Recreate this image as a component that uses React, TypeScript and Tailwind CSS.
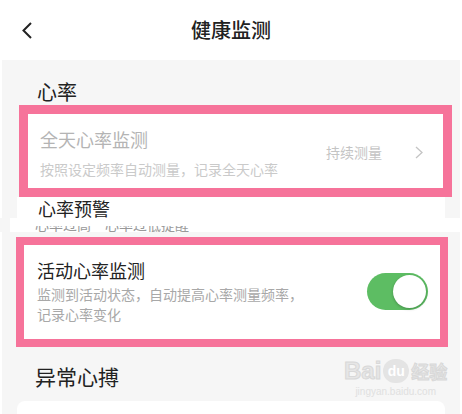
import React from "react";

const font = { fontFamily: '"Noto Sans CJK SC", "Noto Sans", sans-serif' };

const Chevron = ({ className = "" }: { className?: string }) => (
  <svg width="8" height="13" viewBox="0 0 8 13" className={className}>
    <path d="M1 1l6 5.5L1 12" fill="none" stroke="currentColor" strokeWidth="1.3" />
  </svg>
);

const Toggle = () => (
  <div className="w-[61px] h-[37px] rounded-full bg-[#5dbd63] flex items-center justify-end pr-[2px]">
    <div className="w-[33px] h-[33px] rounded-full bg-white shadow-[0_1px_3px_rgba(0,0,0,0.25)]" />
  </div>
);

const App = () => {
  return (
    <div className="w-[462px] h-[414px] bg-white overflow-hidden relative" style={font}>
      {/* Header */}
      <div className="h-[60px] flex items-center relative">
        <svg width="12" height="17" viewBox="0 0 12 17" className="ml-[21px] text-[#222]">
          <path d="M10 1L2.5 8.5 10 16" fill="none" stroke="currentColor" strokeWidth="2" />
        </svg>
        <div className="absolute left-0 right-0 text-center text-[20px] font-medium text-[#222] leading-[28px] pointer-events-none">
          健康监测
        </div>
      </div>

      {/* Section 1 */}
      <div className="bg-[#f6f6f6] mx-[2px]">
        <div className="pl-[35px] pt-[19px] text-[20px] leading-[26px] text-[#222]">心率</div>
        <div className="ml-[17px] w-[433px] border-[9px] border-[#f6739a] bg-white flex items-start pl-[12px] pr-[20px] pt-[13px] pb-[9px]">
          <div className="flex-1">
            <div className="text-[18px] leading-[24px] text-[#b4b4b4]">全天心率监测</div>
            <div className="mt-[8px] text-[14px] leading-[20px] text-[#cacaca]">按照设定频率自动测量，记录全天心率</div>
          </div>
          <div className="flex items-center gap-[33px] mt-[15px] text-[#c4c4c4]">
            <span className="text-[14px] leading-[20px]">持续测量</span>
            <Chevron />
          </div>
        </div>
        <div className="ml-[15px] w-[428px] h-[21px] bg-white overflow-hidden pl-[21px]">
          <div className="text-[18px] leading-[22px] text-[#222]">心率预警</div>
        </div>
      </div>

      {/* stitched strip */}
      <div className="h-[14px] flex">
        <div className="w-[10px] bg-[#f6f6f6]" />
        <div className="flex-1 bg-white pt-[8px] pl-[25px]">
          <div className="h-[6px] overflow-hidden">
            <div className="-mt-[12px] text-[14px] leading-[20px] text-[#999]">心率过高　心率过低提醒</div>
          </div>
        </div>
      </div>

      {/* Section 2 */}
      <div className="bg-[#f6f6f6] mx-[2px] h-full pt-[5px]">
        <div className="ml-[14px] w-[432px] border-[8px] border-[#f6739a] bg-white flex items-center pl-[13px] pr-[12px] pt-[13px] pb-[15px]">
          <div className="flex-1">
            <div className="text-[18px] leading-[24px] text-[#222]">活动心率监测</div>
            <div className="mt-[2px] text-[14px] leading-[20px] text-[#a8a8a8]">
              监测到活动状态，自动提高心率测量频率，
              <br />
              记录心率变化
            </div>
          </div>
          <Toggle />
        </div>
        <div className="pl-[33px] mt-[15px] text-[21px] leading-[28px] text-[#222]">异常心搏</div>
        <div className="ml-[15px] w-[428px] h-[60px] mt-[11px] bg-white rounded-lg" />
      </div>

      {/* watermark */}
      <div className="absolute left-[344px] top-[356px] flex flex-col items-center text-[#e6e6e6] pointer-events-none">
        <div className="flex items-end gap-[2px]">
          <span className="text-[24px] leading-[30px] font-bold" style={{ fontFamily: '"Liberation Sans", sans-serif', WebkitTextStroke: "1px #d8d8d8" }}>
            Bai
          </span>
          <span className="w-[26px] h-[24px] rounded-full bg-[#e4e4e4] text-white text-[14px] font-bold leading-[24px] text-center mb-[3px]" style={{ fontFamily: '"Liberation Sans", sans-serif' }}>
            du
          </span>
          <span className="text-[18px] leading-[30px] font-bold" style={{ WebkitTextStroke: "1px #d8d8d8" }}>经验</span>
        </div>
        <div className="text-[10px] leading-[12px] text-[#e0e0e0]" style={{ fontFamily: '"Liberation Sans", sans-serif' }}>
          jingyan.baidu.com
        </div>
      </div>
    </div>
  );
};

export default App;
